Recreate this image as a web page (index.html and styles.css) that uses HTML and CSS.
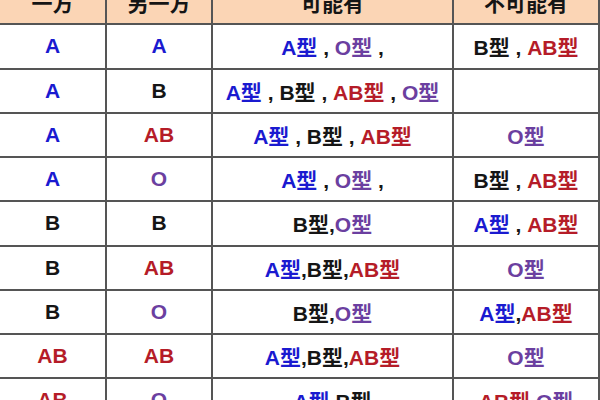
FILE: index.html
```html
<!DOCTYPE html>
<html lang="zh">
<head>
<meta charset="utf-8">
<link rel="stylesheet" href="styles.css">
</head>
<body>
<table class="bt">
  <colgroup>
    <col class="c1"><col class="c2"><col class="c3"><col class="c4">
  </colgroup>
  <thead>
    <tr><th>一方</th><th>另一方</th><th>可能有</th><th>不可能有</th></tr>
  </thead>
  <tbody>
    <tr><td class="a">A</td><td class="a">A</td>
      <td><span class="a">A型</span> , <span class="o">O型</span> ,</td>
      <td><span class="b">B型</span> , <span class="ab">AB型</span></td></tr>
    <tr><td class="a">A</td><td class="b">B</td>
      <td><span class="a">A型</span> , <span class="b">B型</span> , <span class="ab">AB型</span> , <span class="o">O型</span></td>
      <td></td></tr>
    <tr><td class="a">A</td><td class="ab">AB</td>
      <td><span class="a">A型</span> , <span class="b">B型</span> , <span class="ab">AB型</span></td>
      <td><span class="o">O型</span></td></tr>
    <tr><td class="a">A</td><td class="o">O</td>
      <td><span class="a">A型</span> , <span class="o">O型</span> ,</td>
      <td><span class="b">B型</span> , <span class="ab">AB型</span></td></tr>
    <tr><td class="b">B</td><td class="b">B</td>
      <td><span class="b">B型</span>,<span class="o">O型</span></td>
      <td><span class="a">A型</span> , <span class="ab">AB型</span></td></tr>
    <tr><td class="b">B</td><td class="ab">AB</td>
      <td><span class="a">A型</span>,<span class="b">B型</span>,<span class="ab">AB型</span></td>
      <td><span class="o">O型</span></td></tr>
    <tr><td class="b">B</td><td class="o">O</td>
      <td><span class="b">B型</span>,<span class="o">O型</span></td>
      <td><span class="a">A型</span>,<span class="ab">AB型</span></td></tr>
    <tr><td class="ab">AB</td><td class="ab">AB</td>
      <td><span class="a">A型</span>,<span class="b">B型</span>,<span class="ab">AB型</span></td>
      <td><span class="o">O型</span></td></tr>
    <tr><td class="ab">AB</td><td class="o">O</td>
      <td><span class="a">A型</span>,<span class="b">B型</span></td>
      <td><span class="ab">AB型</span>,<span class="o">O型</span></td></tr>
  </tbody>
</table>
</body>
</html>
```
FILE: styles.css
```css
html, body {
  margin: 0;
  padding: 0;
  background: #ffffff;
  overflow: hidden;
}
.bt {
  margin-top: -21px;
  width: 599px;
  border-collapse: collapse;
  table-layout: fixed;
  font-family: "Liberation Sans", "Noto Sans CJK SC", sans-serif;
  font-weight: bold;
  font-size: 21px;
  color: #151515;
}
.c1 { width: 106px; }
.c2 { width: 106px; }
.c3 { width: 241px; }
.c4 { width: 146px; }
.bt th, .bt td {
  border: 2px solid #555555;
  text-align: center;
  vertical-align: middle;
  padding: 0;
  height: 42.25px;
}
.bt th:first-child, .bt td:first-child { border-left: none; }
.bt thead th {
  background: #fbd5b5;
  font-weight: bold;
}
.a { color: #1a1ad0; }
.b { color: #151515; }
.ab { color: #b51c28; }
.o { color: #6b3fa0; }
```
